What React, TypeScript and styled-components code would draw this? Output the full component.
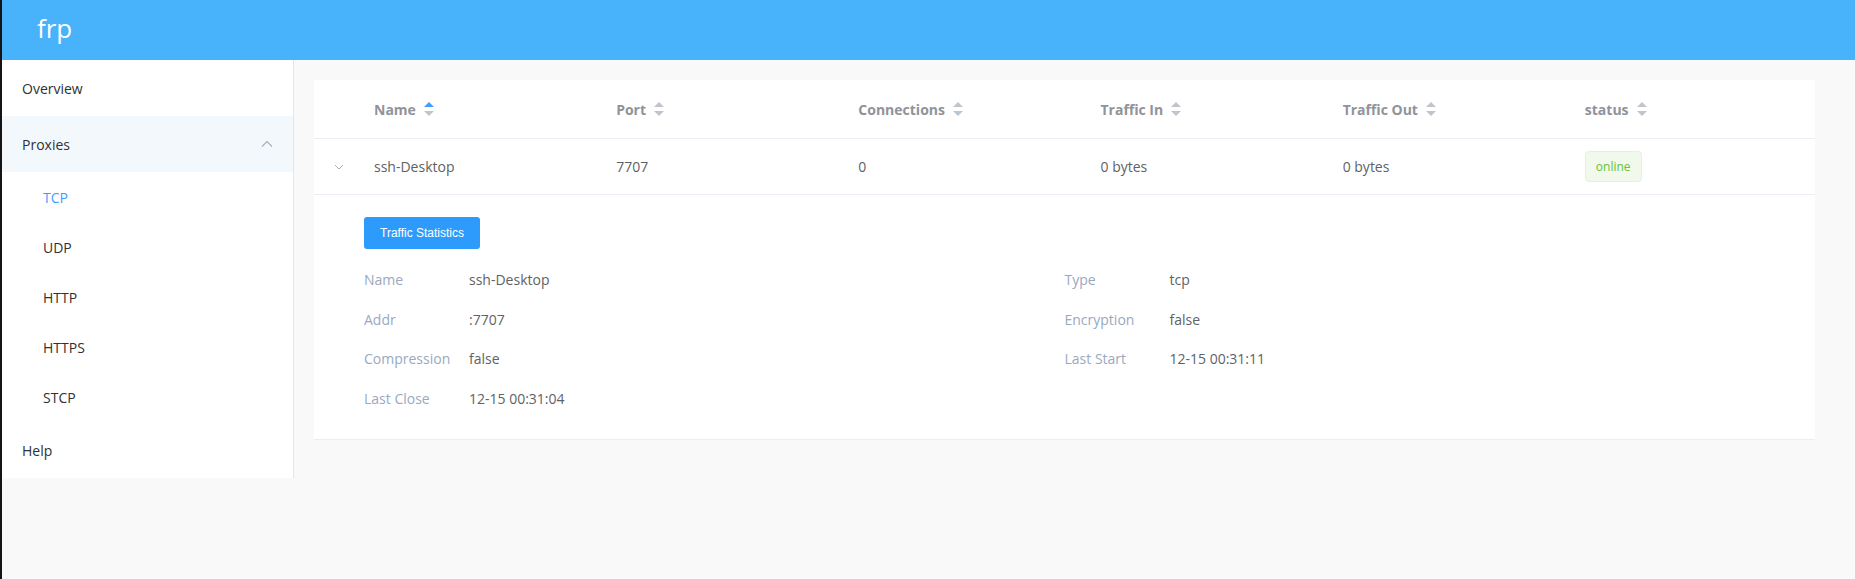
import React from "react";
import styled, { createGlobalStyle } from "styled-components";

const GlobalStyle = createGlobalStyle`
  html, body { margin: 0; padding: 0; }
  body { font-family: "Open Sans", "Noto Sans", sans-serif; background: #f9f9f9; }
  * { box-sizing: border-box; }
`;

const Page = styled.div`
  min-height: 100vh;
  border-left: 2px solid #141414;
  background: #f9f9f9;
  display: flex;
  flex-direction: column;
`;

const TopBar = styled.header`
  height: 60px;
  background: #48b2fb;
  display: flex;
  align-items: center;
  padding-left: 35px;
`;

const Brand = styled.span`
  color: #fff;
  font-size: 26px;
  line-height: 1;
  margin-top: -4px;
`;

const Body = styled.div`
  display: flex;
  align-items: flex-start;
`;

const Sidebar = styled.nav`
  width: 292px;
  background: #fff;
  border-right: 1px solid #e6e6e6;
  display: flex;
  flex-direction: column;
`;

const MenuItem = styled.div<{ $sub?: boolean; $active?: boolean; $open?: boolean }>`
  height: ${(p) => (p.$sub ? 50 : 56)}px;
  display: flex;
  align-items: center;
  justify-content: space-between;
  padding-left: ${(p) => (p.$sub ? 41 : 20)}px;
  padding-right: 20px;
  font-size: 14px;
  color: ${(p) => (p.$active ? "#409eff" : "#303133")};
  background: ${(p) => (p.$open ? "#f3f8fd" : "#fff")};
`;

const Main = styled.main`
  flex: 1;
  padding: 20px 40px 0 20px;
`;

const Card = styled.div`
  background: #fff;
  border-bottom: 1px solid #ebeef5;
`;

const Row = styled.div<{ $head?: boolean }>`
  display: grid;
  grid-template-columns: 48px repeat(6, 1fr);
  align-items: center;
  height: ${(p) => (p.$head ? 59 : 56)}px;
  border-bottom: 1px solid #ebeef5;
  font-size: 14px;
  color: ${(p) => (p.$head ? "#909399" : "#606266")};
  font-weight: ${(p) => (p.$head ? 700 : 400)};
`;

const Cell = styled.div`
  padding: 0 12px;
  display: flex;
  align-items: center;
  gap: 8px;
  white-space: nowrap;
`;

const ExpandCell = styled.div`
  display: flex;
  justify-content: center;
  padding-left: 2px;
`;

const Tag = styled.span`
  display: inline-flex;
  align-items: center;
  height: 31px;
  padding: 0 10px;
  font-size: 12px;
  color: #67c23a;
  background: #f0f9eb;
  border: 1px solid #e1f3d8;
  border-radius: 4px;
`;

const Expanded = styled.div`
  padding: 22px 50px 21px 50px;
`;

const PrimaryButton = styled.button`
  height: 32px;
  padding: 0 16px;
  border: none;
  border-radius: 3px;
  background: #2d9bfc;
  color: #fff;
  font-family: "Liberation Sans", Arial, sans-serif;
  font-size: 12px;
`;

const DetailGrid = styled.div`
  margin-top: 11px;
  display: grid;
  grid-template-columns: 1fr 1fr;
  grid-auto-rows: 39.5px;
`;

const DetailItem = styled.div`
  display: flex;
  align-items: center;
  font-size: 14px;
`;

const DetailLabel = styled.span`
  width: 105px;
  color: #99a9bf;
`;

const DetailValue = styled.span`
  color: #606266;
`;

const SortIcon = ({ active }: { active?: boolean }) => (
  <svg width="10" height="14" viewBox="0 0 10 14">
    <polygon points="5,0 10,5 0,5" fill={active ? "#409eff" : "#c0c4cc"} />
    <polygon points="0,9 10,9 5,14" fill="#c0c4cc" />
  </svg>
);

const ChevronUp = () => (
  <svg width="12" height="8" viewBox="0 0 12 8">
    <polyline points="1,6.5 6,1.5 11,6.5" fill="none" stroke="#a8abb2" strokeWidth="1.1" />
  </svg>
);

const ChevronDown = () => (
  <svg width="10" height="6" viewBox="0 0 10 6">
    <polyline points="1,1 5,5 9,1" fill="none" stroke="#a8abb2" strokeWidth="1" />
  </svg>
);

const columns = ["Name", "Port", "Connections", "Traffic In", "Traffic Out", "status"];

const details: [string, string][] = [
  ["Name", "ssh-Desktop"],
  ["Type", "tcp"],
  ["Addr", ":7707"],
  ["Encryption", "false"],
  ["Compression", "false"],
  ["Last Start", "12-15 00:31:11"],
  ["Last Close", "12-15 00:31:04"],
];

export default function App() {
  return (
    <>
      <GlobalStyle />
      <Page>
        <TopBar>
          <Brand>frp</Brand>
        </TopBar>
        <Body>
          <Sidebar>
            <MenuItem>Overview</MenuItem>
            <MenuItem $open>
              Proxies
              <ChevronUp />
            </MenuItem>
            <MenuItem $sub $active>TCP</MenuItem>
            <MenuItem $sub>UDP</MenuItem>
            <MenuItem $sub>HTTP</MenuItem>
            <MenuItem $sub>HTTPS</MenuItem>
            <MenuItem $sub>STCP</MenuItem>
            <MenuItem>Help</MenuItem>
          </Sidebar>
          <Main>
            <Card>
              <Row $head>
                <div />
                {columns.map((c, i) => (
                  <Cell key={c}>
                    {c}
                    <SortIcon active={i === 0} />
                  </Cell>
                ))}
              </Row>
              <Row>
                <ExpandCell>
                  <ChevronDown />
                </ExpandCell>
                <Cell>ssh-Desktop</Cell>
                <Cell>7707</Cell>
                <Cell>0</Cell>
                <Cell>0 bytes</Cell>
                <Cell>0 bytes</Cell>
                <Cell>
                  <Tag>online</Tag>
                </Cell>
              </Row>
              <Expanded>
                <PrimaryButton>Traffic Statistics</PrimaryButton>
                <DetailGrid>
                  {details.map(([k, v]) => (
                    <DetailItem key={k}>
                      <DetailLabel>{k}</DetailLabel>
                      <DetailValue>{v}</DetailValue>
                    </DetailItem>
                  ))}
                </DetailGrid>
              </Expanded>
            </Card>
          </Main>
        </Body>
      </Page>
    </>
  );
}
